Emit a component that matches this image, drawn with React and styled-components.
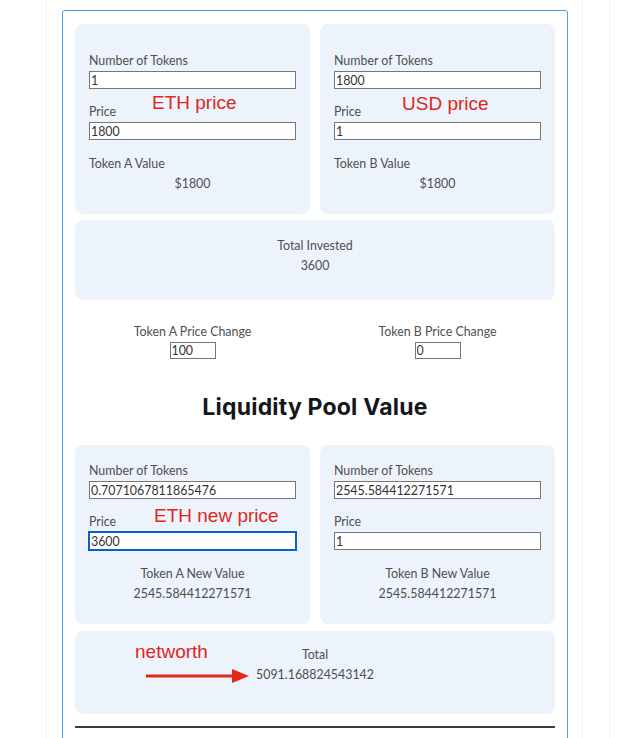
import React from "react";
import styled, { createGlobalStyle } from "styled-components";

const Global = createGlobalStyle`
  html, body { margin: 0; padding: 0; background: #fff; }
  body { font-family: Lato, "Open Sans", sans-serif; color: #4f4f4f; }
  * { box-sizing: border-box; }
`;

const Page = styled.div`
  padding-left: 46px;
  height: 738px;
  overflow: hidden;
`;

const Outer = styled.div`
  width: 564px;
  border-left: 1px solid #f1f1f1;
  border-right: 1px solid #f1f1f1;
  min-height: 738px;
`;

const Column = styled.div`
  width: 536px;
  border-right: 1px solid #f1f1f1;
  padding: 10px 14px 0 15px;
  min-height: 738px;
`;

const Frame = styled.div`
  position: relative;
  border: 1px solid #4b9ee9;
  border-radius: 3px;
  padding: 13px 12px 40px 12px;
`;

const Pair = styled.div`
  display: grid;
  grid-template-columns: 1fr 1fr;
  column-gap: 10px;
`;

const Card = styled.div`
  background: #edf3fa;
  border-radius: 8px;
  padding: ${(p) => p.$pad};
  display: flex;
  flex-direction: column;
`;

const Label = styled.div`
  font-size: 12.4px;
  line-height: 18px;
  margin-top: ${(p) => p.$mt || 0}px;
  text-align: ${(p) => (p.$center ? "center" : "left")};
`;

const Value = styled.div`
  font-size: 12.4px;
  line-height: 18px;
  margin-top: 2px;
  text-align: center;
`;

const Field = styled.input`
  display: block;
  width: 100%;
  height: 18px;
  margin: 0;
  margin-top: ${(p) => p.$mt || 0}px;
  border: 1px solid #767676;
  background: #fff;
  font-family: Lato, "Open Sans", sans-serif;
  font-size: 12.4px;
  color: #333;
  padding: 0 1px;
  outline: ${(p) => (p.$focused ? "2px solid #0a5fcf" : "none")};
  outline-offset: -1px;
`;

const SmallField = styled(Field)`
  width: 46px;
  height: 17px;
  margin: 1px auto 0;
`;

const TotalCard = styled.div`
  background: #edf3fa;
  border-radius: 8px;
  margin-top: ${(p) => p.$mt}px;
  padding: ${(p) => p.$pad};
  text-align: center;
  font-size: 12.4px;
  line-height: 18px;
`;

const TotalValue = styled.div`
  margin-top: 2px;
`;

const ChangeRow = styled.div`
  display: grid;
  grid-template-columns: 1fr 1fr;
  column-gap: 10px;
  margin-top: 23px;
`;

const ChangeCell = styled.div`
  display: flex;
  flex-direction: column;
  align-items: center;
  font-size: 12.4px;
  line-height: 18px;
`;

const Heading = styled.h2`
  margin: 33px 0 0;
  text-align: center;
  font-family: Inter, "Noto Sans", sans-serif;
  font-weight: 700;
  font-size: 23px;
  line-height: 30px;
  color: #15161a;
  letter-spacing: 0.2px;
`;

const LowerPair = styled(Pair)`
  margin-top: 23px;
`;

const Rule = styled.hr`
  margin: 12px 0 0;
  border: 0;
  height: 2px;
  background: #3b3b3b;
`;

const Note = styled.div`
  position: absolute;
  left: ${(p) => p.$x}px;
  top: ${(p) => p.$y}px;
  font-family: "Liberation Sans", Arial, sans-serif;
  font-size: 19px;
  line-height: 20px;
  color: #e1261c;
  white-space: nowrap;
  pointer-events: none;
`;

const Arrow = styled.svg`
  position: absolute;
  left: 83px;
  top: 657px;
`;

function TokenCard({ tokens, price, title, value, focused, lower }) {
  return (
    <Card $pad={lower ? "17px 14px 21px" : "28px 14px 21px"}>
      <Label>Number of Tokens</Label>
      <Field $mt={1} defaultValue={tokens} readOnly />
      <Label $mt={14}>Price</Label>
      <Field $mt={1} defaultValue={price} readOnly $focused={focused} />
      <Label $mt={15} $center={lower}>{title}</Label>
      <Value>{value}</Value>
    </Card>
  );
}

export default function App() {
  return (
    <>
      <Global />
      <Page>
        <Outer>
          <Column>
            <Frame>
              <Pair>
                <TokenCard tokens="1" price="1800" title="Token A Value" value="$1800" />
                <TokenCard tokens="1800" price="1" title="Token B Value" value="$1800" />
              </Pair>
              <TotalCard $mt={6} $pad="17px 0 25px">
                <div>Total Invested</div>
                <TotalValue>3600</TotalValue>
              </TotalCard>
              <ChangeRow>
                <ChangeCell>
                  Token A Price Change
                  <SmallField defaultValue="100" readOnly />
                </ChangeCell>
                <ChangeCell>
                  Token B Price Change
                  <SmallField defaultValue="0" readOnly />
                </ChangeCell>
              </ChangeRow>
              <Heading>Liquidity Pool Value</Heading>
              <LowerPair>
                <TokenCard
                  lower
                  tokens="0.7071067811865476"
                  price="3600"
                  focused
                  title="Token A New Value"
                  value="2545.584412271571"
                />
                <TokenCard
                  lower
                  tokens="2545.584412271571"
                  price="1"
                  title="Token B New Value"
                  value="2545.584412271571"
                />
              </LowerPair>
              <TotalCard $mt={7} $pad="15px 0 30px">
                <div>Total</div>
                <TotalValue>5091.168824543142</TotalValue>
              </TotalCard>
              <Rule />

              <Note $x={89} $y={82}>ETH price</Note>
              <Note $x={339} $y={83}>USD price</Note>
              <Note $x={91} $y={495}>ETH new price</Note>
              <Note $x={72} $y={631}>networth</Note>
              <Arrow width="104" height="16" viewBox="0 0 104 16">
                <rect x="0" y="6.5" width="88" height="3" fill="#e1261c" />
                <polygon points="86,1 103,8 86,15" fill="#e1261c" />
              </Arrow>
            </Frame>
          </Column>
        </Outer>
      </Page>
    </>
  );
}
